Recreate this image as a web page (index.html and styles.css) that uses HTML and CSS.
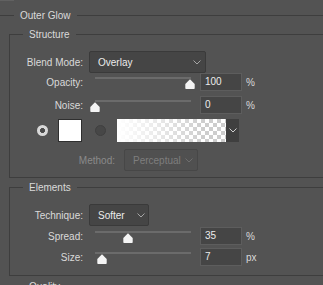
FILE: index.html
```html
<!DOCTYPE html>
<html lang="en">
<head>
    <meta charset="UTF-8">
    <meta name="viewport" content="width=device-width, initial-scale=1.0">
    <title>Outer Glow</title>
<link rel="stylesheet" href="styles.css">
</head>
<body>
    <div class="edge"></div>

    <fieldset class="panel">
        <legend>Outer Glow</legend>

        <!-- Structure -->
        <fieldset class="group structure">
            <legend>Structure</legend>

            <div class="row row-blend">
                <span class="label">Blend Mode:</span>
                <div class="select select-blend">
                    <span>Overlay</span>
                    <svg class="chevron" width="8" height="5" viewBox="0 0 8 5"><polyline points="0.5,0.5 4,4 7.5,0.5" /></svg>
                </div>
            </div>

            <div class="row row-slider row-opacity">
                <span class="label">Opacity:</span>
                <div class="slider">
                    <div class="track"></div>
                    <svg class="thumb" style="--v:1" width="10" height="10" viewBox="0 0 10 10"><path d="M5 0.3 L9.7 5 L9.7 9.2 Q9.7 10 8.9 10 L1.1 10 Q0.3 10 0.3 9.2 L0.3 5 Z" /></svg>
                </div>
                <div class="field">100</div>
                <span class="unit">%</span>
            </div>

            <div class="row row-slider row-noise">
                <span class="label">Noise:</span>
                <div class="slider">
                    <div class="track"></div>
                    <svg class="thumb" style="--v:0" width="10" height="10" viewBox="0 0 10 10"><path d="M5 0.3 L9.7 5 L9.7 9.2 Q9.7 10 8.9 10 L1.1 10 Q0.3 10 0.3 9.2 L0.3 5 Z" /></svg>
                </div>
                <div class="field">0</div>
                <span class="unit">%</span>
            </div>

            <div class="color-row">
                <span class="radio checked"></span>
                <span class="swatch"></span>
                <span class="radio"></span>
                <div class="gradient-picker">
                    <div class="gradient"></div>
                    <div class="gradient-arrow">
                        <svg class="chevron" width="8" height="5" viewBox="0 0 8 5"><polyline points="0.5,0.5 4,4 7.5,0.5" /></svg>
                    </div>
                </div>
            </div>

            <div class="row row-method">
                <span class="label label-disabled">Method:</span>
                <div class="select select-method">
                    <span>Perceptual</span>
                    <svg class="chevron" width="8" height="5" viewBox="0 0 8 5"><polyline points="0.5,0.5 4,4 7.5,0.5" /></svg>
                </div>
            </div>
        </fieldset>

        <!-- Elements -->
        <fieldset class="group elements">
            <legend>Elements</legend>

            <div class="row row-technique">
                <span class="label">Technique:</span>
                <div class="select select-technique">
                    <span>Softer</span>
                    <svg class="chevron" width="8" height="5" viewBox="0 0 8 5"><polyline points="0.5,0.5 4,4 7.5,0.5" /></svg>
                </div>
            </div>

            <div class="row row-slider row-spread">
                <span class="label">Spread:</span>
                <div class="slider">
                    <div class="track"></div>
                    <svg class="thumb" style="--v:0.35" width="10" height="10" viewBox="0 0 10 10"><path d="M5 0.3 L9.7 5 L9.7 9.2 Q9.7 10 8.9 10 L1.1 10 Q0.3 10 0.3 9.2 L0.3 5 Z" /></svg>
                </div>
                <div class="field">35</div>
                <span class="unit">%</span>
            </div>

            <div class="row row-slider row-size">
                <span class="label">Size:</span>
                <div class="slider">
                    <div class="track"></div>
                    <svg class="thumb" style="--v:0.07" width="10" height="10" viewBox="0 0 10 10"><path d="M5 0.3 L9.7 5 L9.7 9.2 Q9.7 10 8.9 10 L1.1 10 Q0.3 10 0.3 9.2 L0.3 5 Z" /></svg>
                </div>
                <div class="field">7</div>
                <span class="unit">px</span>
            </div>
        </fieldset>

        <!-- Quality -->
        <fieldset class="group quality">
            <legend>Quality</legend>
        </fieldset>
    </fieldset>
</body>
</html>
```

FILE: styles.css
```css
/* Panel */
body {
    margin: 0;
    width: 323px;
    height: 285px;
    overflow: hidden;
    background-color: #535353;
    color: #dadada;
    font-family: "Liberation Sans", Arial, sans-serif;
    font-size: 10px;
    line-height: 13px;
}

.edge {
    width: 14px;
    height: 1px;
    background-color: #616161;
}

fieldset {
    margin: 0;
    padding: 0;
    min-inline-size: 0;
    border: 1px solid #3e3e3e;
}

legend {
    height: 13px;
    padding: 0 6px;
    line-height: 13px;
}

.panel {
    width: 340px;
    margin: 8px 0 0 -2px;
}

.panel > legend {
    margin-left: 15px;
}

.group {
    margin-left: 10px;
}

.group > legend {
    margin-left: 13px;
}

.structure {
    margin-top: 6px;
    padding-bottom: 6px;
}

.elements {
    margin-top: 3px;
    padding-bottom: 9px;
}

.quality {
    margin-top: 4px;
    height: 40px;
}

/* Rows */
.row {
    display: flex;
    align-items: center;
}

.label {
    flex: none;
    width: 73px;
    text-align: right;
}

.label-disabled {
    width: 105px;
    color: #8a8a8a;
}

.row-blend,
.row-technique {
    margin-top: 10px;
}

.row-noise {
    margin-top: 5px;
}

.row-spread {
    margin-top: 1px;
}

.row-size {
    margin-top: 3px;
}

.row-method {
    margin-top: 7px;
}

/* Dropdowns */
.select {
    display: flex;
    align-items: center;
    justify-content: space-between;
    box-sizing: border-box;
    height: 22px;
    margin-left: 6px;
    padding: 0 4px 0 8px;
    background-color: #454545;
    border: 1px solid #3a3a3a;
    border-radius: 2px;
    color: #ececec;
}

.select-blend {
    width: 117px;
}

.select-technique {
    width: 60px;
    padding-right: 3px;
}

.select-method {
    width: 74px;
    margin-left: 9px;
    background-color: #505050;
    border-color: #474747;
    color: #7e7e7e;
}

.chevron {
    fill: none;
    stroke: #a5a5a5;
    stroke-width: 1;
}

.select-method .chevron {
    stroke: #6e6e6e;
}

/* Sliders */
.row-slider {
    height: 18px;
}

.slider {
    position: relative;
    align-self: stretch;
    width: 96px;
    margin-left: 12px;
}

.track {
    margin-top: 4px;
    height: 2px;
    background-color: #6b6b6b;
}

.thumb {
    position: absolute;
    top: 6px;
    left: calc(var(--v) * 95px - 5px);
    fill: #f4f4f4;
}

.field {
    box-sizing: border-box;
    width: 42px;
    height: 18px;
    margin-left: 9px;
    padding-left: 4px;
    background-color: #454545;
    border: 1px solid #5d5d5d;
    color: #ececec;
    line-height: 16px;
}

.unit {
    margin-left: 4px;
}

/* Colour row */
.color-row {
    display: flex;
    align-items: center;
    height: 23px;
    margin-top: 5px;
}

.radio {
    box-sizing: border-box;
    width: 11px;
    height: 11px;
    margin-left: 13px;
    border-radius: 50%;
    background-color: #474747;
    border: 1px solid #404040;
}

.radio.checked {
    margin-left: 27px;
    border: none;
    background: radial-gradient(circle, #4a4a4a 0 2.2px, #d8d8d8 2.8px);
}

.swatch {
    box-sizing: border-box;
    width: 24px;
    height: 23px;
    margin-left: 10px;
    background-color: #ffffff;
    border: 1px solid #2f2f2f;
}

.gradient-picker {
    display: flex;
    height: 23px;
    margin-left: 11px;
}

.gradient {
    width: 109px;
    background-color: #ffffff;
    background-image:
        linear-gradient(to right, #ffffff 0%, rgba(255, 255, 255, 0.6) 35%, rgba(255, 255, 255, 0) 80%),
        linear-gradient(45deg, #cdcdcd 25%, transparent 25%, transparent 75%, #cdcdcd 75%),
        linear-gradient(45deg, #cdcdcd 25%, transparent 25%, transparent 75%, #cdcdcd 75%);
    background-size: 100% 100%, 8px 8px, 8px 8px;
    background-position: 0 0, 0 0, 4px 4px;
}

.gradient-arrow {
    display: flex;
    align-items: center;
    justify-content: center;
    width: 13px;
    background-color: #3f3f3f;
}

.gradient-arrow .chevron {
    stroke: #cfcfcf;
}
```
